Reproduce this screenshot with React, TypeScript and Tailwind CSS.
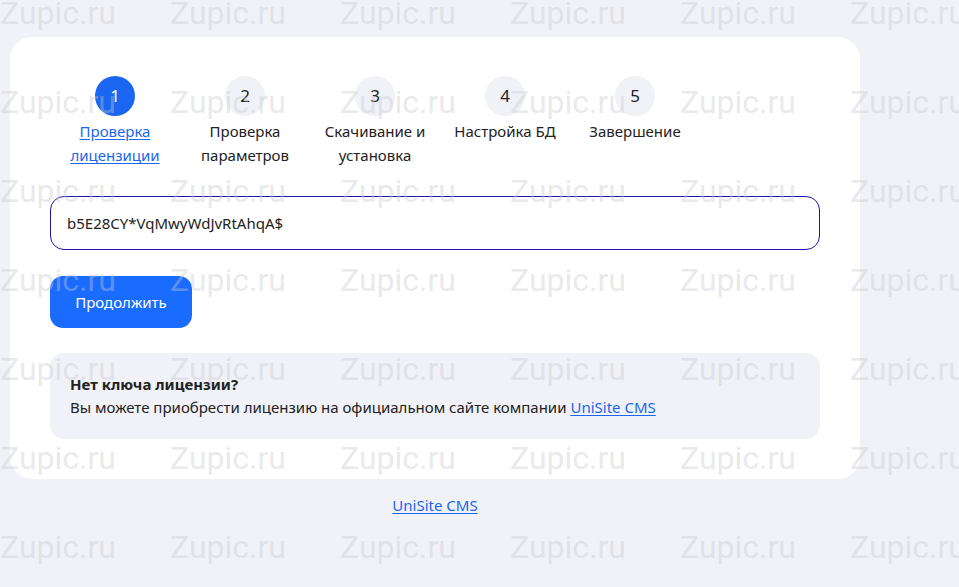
import React from 'react';

const steps = [
  { n: 1, label: ['Проверка', 'лицензиции'] },
  { n: 2, label: ['Проверка', 'параметров'] },
  { n: 3, label: ['Скачивание и', 'установка'] },
  { n: 4, label: ['Настройка БД'] },
  { n: 5, label: ['Завершение'] },
];

const rows = [0, 1, 2, 3, 4, 5, 6];
const cols = [0, 1, 2, 3, 4, 5];

// tiled watermark that sits over the whole page
function Watermark() {
  return (
    <div className="pointer-events-none absolute inset-0 overflow-hidden">
      {rows.map(r => (
        <div key={r} className="flex h-[89px]" style={{ marginTop: r === 0 ? -7 : 0 }}>
          {cols.map(c => (
            <span
              key={c}
              className="w-[170px] shrink-0 text-[32px] leading-[40px] text-[#c8c8d0]/40 font-['Roboto',sans-serif]"
            >
              Zupic.ru
            </span>
          ))}
        </div>
      ))}
    </div>
  );
}

export default function App() {
  return (
    <div className="relative w-[959px] h-[587px] overflow-hidden bg-[#f1f2f7] font-['Noto_Sans',sans-serif] text-[#222]">
      <div className="pl-[10px] pt-[37px] w-[860px]">
        <div className="bg-white rounded-[22px] px-10 pt-[39px] pb-[40px]">
          {/* Steps */}
          <div className="flex">
            {steps.map(s => (
              <div key={s.n} className="w-[130px] flex flex-col items-center">
                <div
                  className={`w-10 h-10 rounded-full flex items-center justify-center text-[17px] ${
                    s.n === 1 ? 'bg-[#1a66f0] text-white' : 'bg-[#f1f2f7] text-[#222]'
                  }`}
                >
                  {s.n}
                </div>
                <div
                  className={`mt-[3px] text-center text-[15px] leading-6 ${
                    s.n === 1 ? 'text-[#1a66f0] underline underline-offset-2' : ''
                  }`}
                >
                  {s.label.map(l => (
                    <div key={l} className="whitespace-nowrap">{l}</div>
                  ))}
                </div>
              </div>
            ))}
          </div>

          {/* License input */}
          <div className="mt-[29px] h-[54px] border border-[#1d14b0] rounded-[14px] flex items-center px-4 text-[15px]">
            b5E28CY*VqMwyWdJvRtAhqA$
          </div>

          <button className="mt-[26px] h-[52px] w-[142px] rounded-[13px] bg-[#1a6cff] text-white text-[15px]">
            Продолжить
          </button>

          {/* Info */}
          <div className="mt-[25px] bg-[#f1f2f7] rounded-[14px] px-5 pt-[20px] pb-[20px] text-[15px] leading-[23px]">
            <div className="font-bold">Нет ключа лицензии?</div>
            <div>
              Вы можете приобрести лицензию на официальном сайте компании{' '}
              <a className="text-[#1a66f0] underline underline-offset-2">UniSite CMS</a>
            </div>
          </div>
        </div>
        <div className="mt-[15px] text-center text-[15px]">
          <a className="text-[#1a66f0] underline underline-offset-2">UniSite CMS</a>
        </div>
      </div>
      <Watermark />
    </div>
  );
}
